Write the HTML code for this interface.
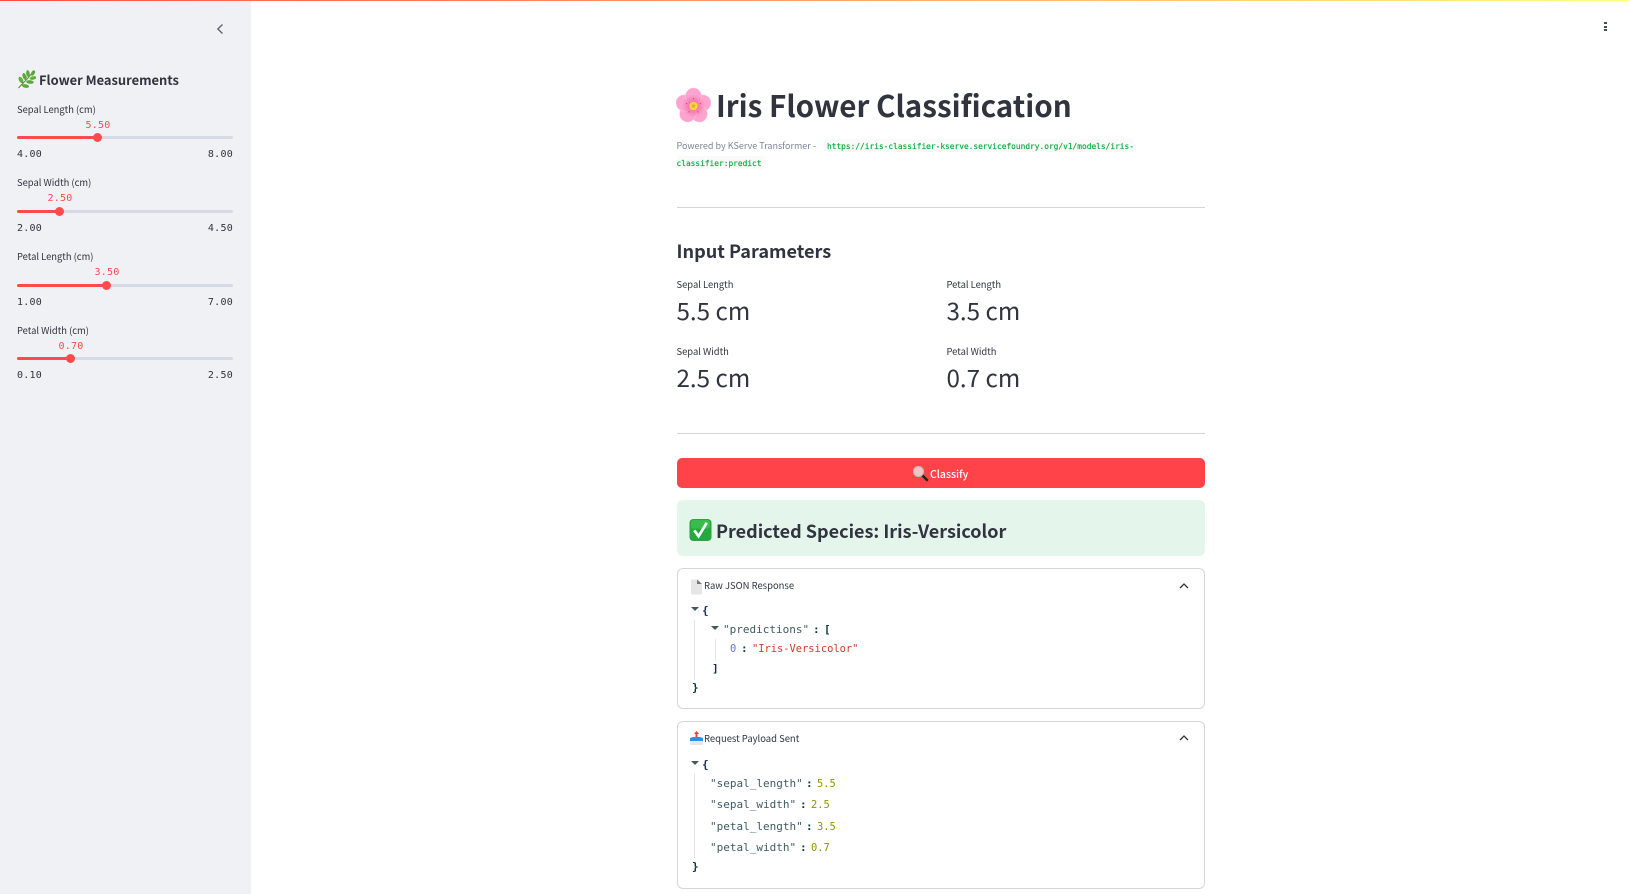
<!DOCTYPE html>
<html><head><meta charset="utf-8"><title>Iris Flower Classification</title>
<style>
*{box-sizing:border-box;margin:0;padding:0}
html,body{width:1629px;height:894px;overflow:hidden;background:#fff}
body{position:relative;font-family:"Noto Sans CJK SC","Liberation Sans",sans-serif;color:#31333f}
.t{position:absolute;white-space:nowrap;line-height:20px;height:20px}
.m{font-family:"DejaVu Sans Mono","Liberation Mono",monospace}
.abs{position:absolute}
#side{position:absolute;left:0;top:0;width:251px;height:894px;background:#eff1f5}
#bar{position:absolute;left:0;top:0;width:1629px;height:1px;background:linear-gradient(90deg,#ff4b4b,#ffb36b 60%,#fffd80);z-index:5}
.lab{font-size:9.4px;left:17px;color:#31333f}
.val{font-size:10px;letter-spacing:.25px;color:#ff4b4b;transform:translateX(-50%)}
.mm{font-size:10px;letter-spacing:.25px;color:#31333f}
.track{position:absolute;left:17px;width:216px;height:3px;background:#d5dae5;border-radius:2px}
.fill{position:absolute;left:0;top:0;height:3px;background:#ff4b4b;border-radius:2px}
.thumb{position:absolute;width:9px;height:9px;border-radius:50%;background:#ff4b4b}
.hr{position:absolute;left:677px;width:528px;height:1px;background:#d3d4d7}
.ml{font-size:9.4px;color:#31333f}
.mv{font-size:24.2px;color:#31333f}
.code{position:absolute;background:#fafafa;border-radius:3px}
.g{font-size:7.85px;font-weight:normal;color:#09ab3b;-webkit-text-stroke:.15px #09ab3b}
.exp{position:absolute;left:677px;width:528px;border:1px solid #d5d6d9;border-radius:6px}
.et{font-size:9.45px;color:#31333f}
.k{font-size:11px;color:#3f5a63}
.p{font-size:11px;color:#073642;font-weight:bold}
.n{font-size:10.4px;color:#859900}
.guide{position:absolute;width:1px;background:#e3e5e8}
.tri{position:absolute;width:0;height:0;border-left:4px solid transparent;border-right:4px solid transparent;border-top:4.5px solid #3f5a63}
</style></head><body>
<div id="bar"></div>
<div id="side"></div>

<svg class="abs" style="left:214px;top:22px" width="12" height="14" viewBox="0 0 12 14"><path d="M8.5 2.5 L3.8 7 L8.5 11.5" fill="none" stroke="#5c5f6b" stroke-width="1.3"/></svg>

<!-- herb -->
<svg class="abs" style="left:17px;top:70px" width="19" height="19" viewBox="0 0 19 19"><path d="M1.5 18 C5 14 10 10 15 3" fill="none" stroke="#4f8f2f" stroke-width="1"/><g fill="#5aa83a"><ellipse cx="16" cy="3" rx="1.7" ry="3" transform="rotate(30 16 3)"/><ellipse cx="11" cy="3.5" rx="1.7" ry="3.4" transform="rotate(-10 11 3.5)"/><ellipse cx="16" cy="8" rx="3.4" ry="1.7" transform="rotate(-10 16 8)"/><ellipse cx="7.5" cy="6.5" rx="1.8" ry="3.6" transform="rotate(-20 7.5 6.5)"/><ellipse cx="13" cy="12" rx="3.8" ry="1.8" transform="rotate(5 13 12)"/><ellipse cx="4" cy="10" rx="1.9" ry="3.6" transform="rotate(-30 4 10)"/><ellipse cx="8.5" cy="16" rx="3.6" ry="1.8" transform="rotate(10 8.5 16)"/></g><path d="M3 7.5 l2.5 4 M9 2 l1 6 M13.5 8 l3-.4" stroke="#8ccc66" stroke-width=".5" fill="none"/></svg>
<div class="t" style="left:39px;top:70px;font-size:12.9px;font-weight:600">Flower Measurements</div>

<div class="t lab" style="top:99px">Sepal Length (cm)</div>
<div class="t val m" style="left:98px;top:115.5px">5.50</div>
<div class="track" style="top:136px"><div class="fill" style="width:81px"></div></div>
<div class="thumb" style="left:93px;top:133px"></div>
<div class="t mm m" style="left:17px;top:144.5px">4.00</div>
<div class="t mm m" style="right:1396px;top:144.5px">8.00</div>

<div class="t lab" style="top:172px">Sepal Width (cm)</div>
<div class="t val m" style="left:60px;top:188.5px">2.50</div>
<div class="track" style="top:210px"><div class="fill" style="width:43px"></div></div>
<div class="thumb" style="left:55px;top:207px"></div>
<div class="t mm m" style="left:17px;top:218.5px">2.00</div>
<div class="t mm m" style="right:1396px;top:218.5px">4.50</div>

<div class="t lab" style="top:246px">Petal Length (cm)</div>
<div class="t val m" style="left:107px;top:262.5px">3.50</div>
<div class="track" style="top:284px"><div class="fill" style="width:90px"></div></div>
<div class="thumb" style="left:102px;top:281px"></div>
<div class="t mm m" style="left:17px;top:292.5px">1.00</div>
<div class="t mm m" style="right:1396px;top:292.5px">7.00</div>

<div class="t lab" style="top:320px">Petal Width (cm)</div>
<div class="t val m" style="left:71px;top:336.5px">0.70</div>
<div class="track" style="top:357px"><div class="fill" style="width:54px"></div></div>
<div class="thumb" style="left:66px;top:354px"></div>
<div class="t mm m" style="left:17px;top:365.5px">0.10</div>
<div class="t mm m" style="right:1396px;top:365.5px">2.50</div>

<!-- kebab -->
<div class="abs" style="left:1604px;top:22px;width:3px;height:2.4px;background:#4a4c57"></div>
<div class="abs" style="left:1604px;top:25.5px;width:3px;height:2.4px;background:#4a4c57"></div>
<div class="abs" style="left:1604px;top:29px;width:3px;height:2.4px;background:#4a4c57"></div>

<!-- flower -->
<svg class="abs" style="left:676px;top:88px" width="35" height="35" viewBox="0 0 36 36"><defs><radialGradient id="ct" gradientUnits="userSpaceOnUse" cx="18" cy="18.5" r="12"><stop offset="0" stop-color="#ec4f92" stop-opacity=".85"/><stop offset="1" stop-color="#ec4f92" stop-opacity="0"/></radialGradient></defs><g fill="#fca4cf" stroke="#ffc6e0" stroke-width=".5"><ellipse cx="18" cy="9" rx="8.4" ry="9" transform="rotate(72 18 18.5)"/><ellipse cx="18" cy="9" rx="8.4" ry="9" transform="rotate(144 18 18.5)"/><ellipse cx="18" cy="9" rx="8.4" ry="9" transform="rotate(216 18 18.5)"/><ellipse cx="18" cy="9" rx="8.4" ry="9" transform="rotate(288 18 18.5)"/><ellipse cx="18" cy="9" rx="8.4" ry="9"/></g><circle cx="18" cy="18.5" r="12" fill="url(#ct)"/><g fill="#c43a78"><circle cx="18" cy="11" r=".6"/><circle cx="25" cy="16" r=".6"/><circle cx="22.5" cy="24.5" r=".6"/><circle cx="13.5" cy="24.5" r=".6"/><circle cx="11" cy="16" r=".6"/></g><circle cx="18" cy="18.5" r="4.4" fill="#f8d83e"/><circle cx="18" cy="18.5" r="1.8" fill="#f0a830"/></svg>
<div class="t" style="left:716px;top:85px;height:40px;line-height:40px;font-size:29.6px;font-weight:700;color:#31333f">Iris Flower Classification</div>

<div class="t" style="left:676.5px;top:136px;font-size:9px;color:#808495">Powered by KServe Transformer -</div>
<div class="code" style="left:824px;top:139px;width:310px;height:13px"></div>
<div class="code" style="left:677px;top:156px;width:88px;height:13px"></div>
<div class="t m g" style="left:827px;top:137px">https://iris-classifier-kserve.servicefoundry.org/v1/models/iris-</div>
<div class="t m g" style="left:676.5px;top:154px">classifier:predict</div>

<div class="hr" style="top:207px"></div>

<div class="t" style="left:676.5px;top:241px;font-size:18.1px;font-weight:600">Input Parameters</div>

<div class="t ml" style="left:676.5px;top:274px">Sepal Length</div>
<div class="t mv" style="left:676.5px;top:300px">5.5 cm</div>
<div class="t ml" style="left:946.5px;top:274px">Petal Length</div>
<div class="t mv" style="left:946.5px;top:300px">3.5 cm</div>
<div class="t ml" style="left:676.5px;top:341px">Sepal Width</div>
<div class="t mv" style="left:676.5px;top:367px">2.5 cm</div>
<div class="t ml" style="left:946.5px;top:341px">Petal Width</div>
<div class="t mv" style="left:946.5px;top:367px">0.7 cm</div>

<div class="hr" style="top:433px"></div>

<!-- button -->
<div class="abs" style="left:677px;top:458px;width:528px;height:30px;background:#ff4349;border-radius:5px"></div>
<svg class="abs" style="left:912px;top:465px" width="17" height="17" viewBox="0 0 17 17"><path d="M10 10 L15 15" stroke="#222" stroke-width="2.6" stroke-linecap="round"/><circle cx="6.5" cy="6.5" r="5" fill="#f4c4c4" stroke="#bbb" stroke-width="1.2"/></svg>
<div class="t" style="left:930px;top:464.5px;font-size:10.5px;font-weight:500;color:#fff">Classify</div>

<!-- success -->
<div class="abs" style="left:677px;top:500px;width:528px;height:56px;background:#e4f6ec;border-radius:6px"></div>
<svg class="abs" style="left:689px;top:518px" width="23" height="24" viewBox="0 0 24 24"><rect x=".5" y=".5" width="23" height="23" rx="4" fill="#26a83e"/><rect x="2" y="1.5" width="20" height="9" rx="3" fill="#4cc95a" opacity=".55"/><path d="M5.5 12.5 L10 18.5 L18.5 4.5" fill="none" stroke="#fff" stroke-width="2.8"/></svg>
<div class="t" style="left:716px;top:520.5px;font-size:18px;font-weight:600">Predicted Species: Iris-Versicolor</div>

<!-- expander 1 -->
<div class="exp" style="top:568px;height:141px"></div>
<svg class="abs" style="left:690px;top:579px" width="13" height="16" viewBox="0 0 13 16"><path d="M1 .5 H7 L12 5 V15.5 H1 Z" fill="#e6e6e6"/><path d="M7 .5 V5 H12 Z" fill="#777"/></svg>
<div class="t et" style="left:704px;top:575px">Raw JSON Response</div>
<svg class="abs" style="left:1178px;top:581px" width="12" height="10" viewBox="0 0 12 10"><path d="M2 7 L6 3 L10 7" fill="none" stroke="#31333f" stroke-width="1.3"/></svg>
<div class="tri" style="left:691px;top:607px"></div>
<div class="t m p" style="left:702px;top:600.5px">{</div>
<div class="guide" style="left:694px;top:620px;height:60px"></div>
<div class="tri" style="left:711px;top:626px"></div>
<div class="t m k" style="left:723px;top:619.5px">"predictions"</div>
<div class="t m p" style="left:813px;top:619.5px">:</div>
<div class="t m p" style="left:824px;top:619.5px">[</div>
<div class="guide" style="left:715px;top:639px;height:22px"></div>
<div class="t m" style="left:730px;top:638.5px;font-size:10.4px;color:#6c71c4">0</div>
<div class="t m p" style="left:741px;top:638.5px">:</div>
<div class="t m" style="left:752px;top:638.5px;font-size:10.4px;color:#cb3c22">"Iris-Versicolor"</div>
<div class="t m p" style="left:712px;top:659px">]</div>
<div class="t m p" style="left:692px;top:678px">}</div>

<!-- expander 2 -->
<div class="exp" style="top:721px;height:168px"></div>
<svg class="abs" style="left:690px;top:730px" width="13" height="16" viewBox="0 0 13 16"><path d="M6.5 1 L9 4 H7.5 V7 H5.5 V4 H4 Z" fill="#e8403a"/><path d="M0 8 L3 7 H10 L13 8 V11 L10 14 H3 L0 11 Z" fill="#2f8fe0"/><path d="M0 11 H13 V15 H0 Z" fill="#e4e8ec"/></svg>
<div class="t et" style="left:704px;top:728px">Request Payload Sent</div>
<svg class="abs" style="left:1178px;top:733px" width="12" height="10" viewBox="0 0 12 10"><path d="M2 7 L6 3 L10 7" fill="none" stroke="#31333f" stroke-width="1.3"/></svg>
<div class="tri" style="left:691px;top:761px"></div>
<div class="t m p" style="left:702px;top:755px">{</div>
<div class="guide" style="left:694px;top:774px;height:84px"></div>
<div class="t m k" style="left:710px;top:773.5px">"sepal_length"</div><div class="t m p" style="left:806px;top:773.5px">:</div><div class="t m n" style="left:817px;top:773.5px">5.5</div>
<div class="t m k" style="left:710px;top:795px">"sepal_width"</div><div class="t m p" style="left:800px;top:795px">:</div><div class="t m n" style="left:811px;top:795px">2.5</div>
<div class="t m k" style="left:710px;top:817px">"petal_length"</div><div class="t m p" style="left:806px;top:817px">:</div><div class="t m n" style="left:817px;top:817px">3.5</div>
<div class="t m k" style="left:710px;top:838px">"petal_width"</div><div class="t m p" style="left:800px;top:838px">:</div><div class="t m n" style="left:811px;top:838px">0.7</div>
<div class="t m p" style="left:692px;top:857px">}</div>
</body></html>
